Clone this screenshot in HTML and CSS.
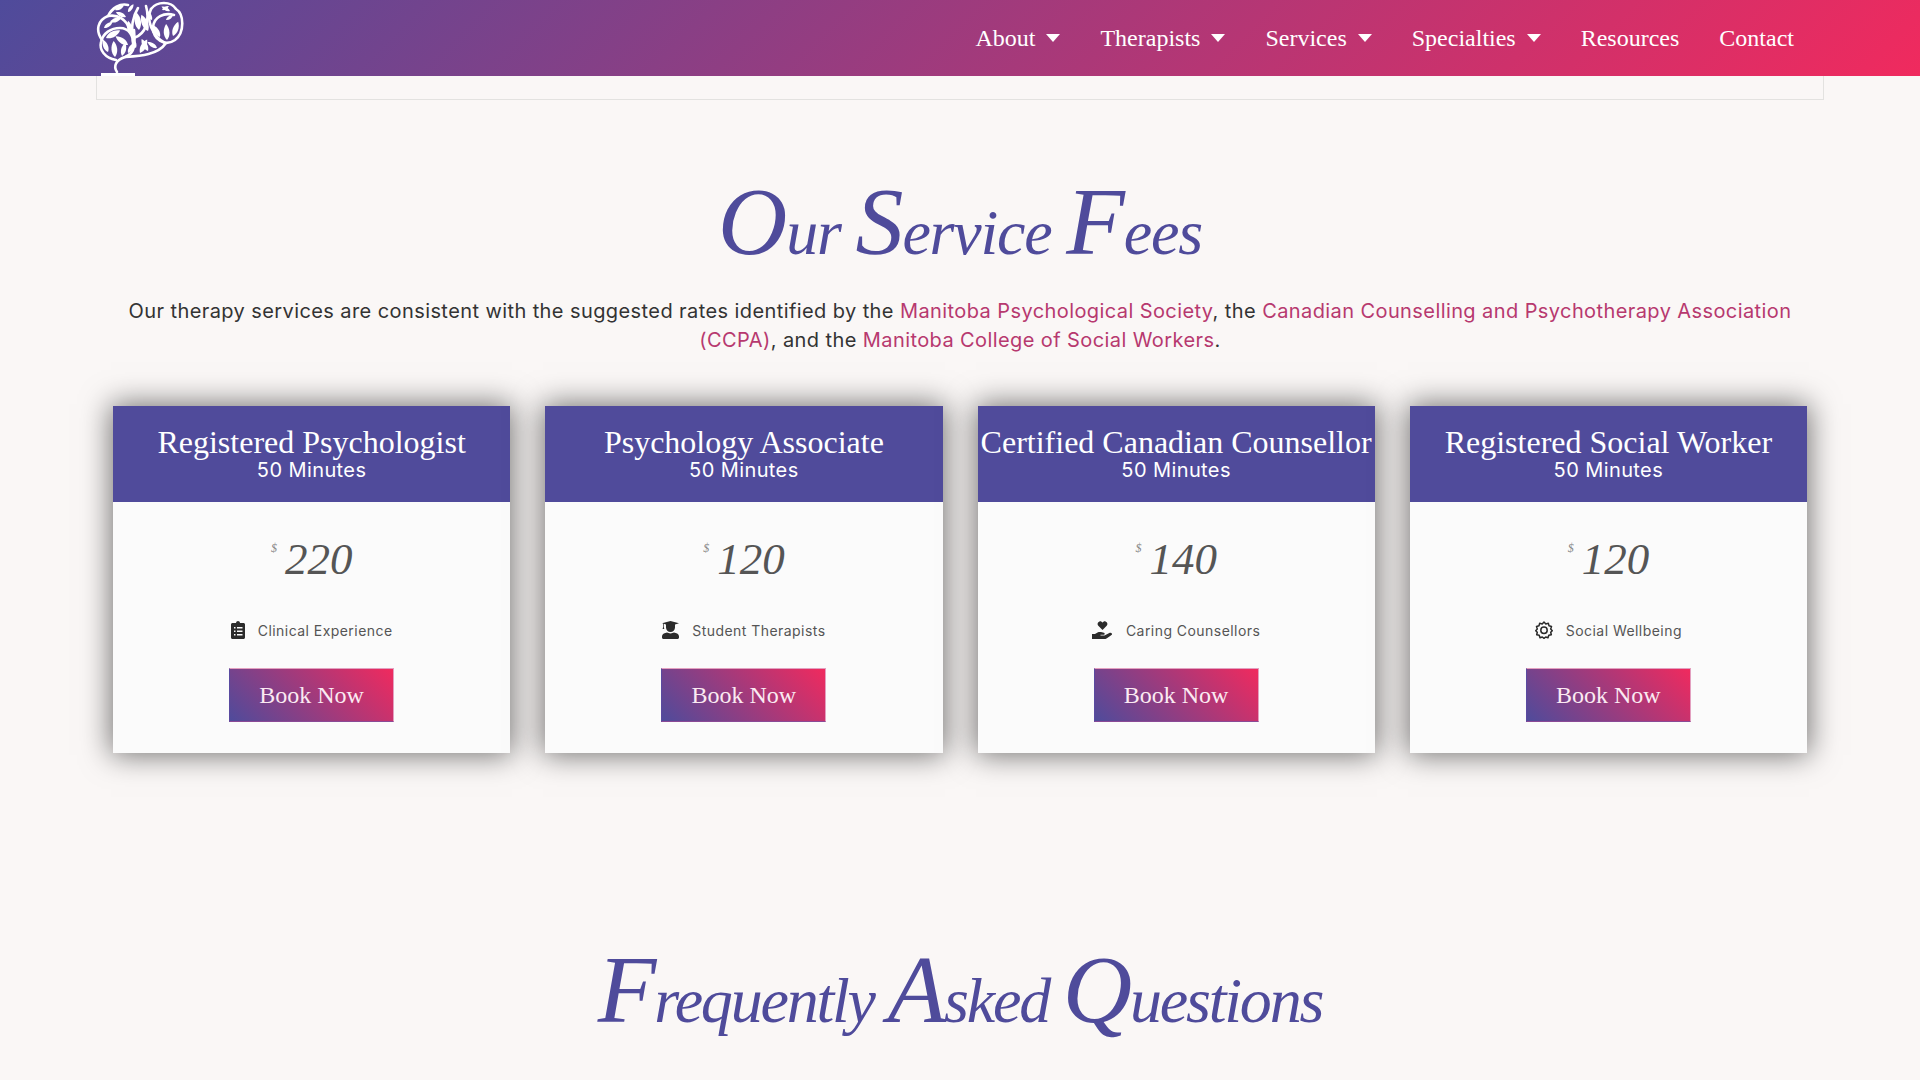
FILE: index.html
```html
<!DOCTYPE html>
<html lang="en">
<head>
    <meta charset="UTF-8">
    <title>Our Service Fees</title>
    <link rel="stylesheet" href="styles.css">
</head>
<body>
    <header class="site-header">
        <a class="logo" href="#" aria-label="Home">
            <svg width="88" height="76" viewBox="96 0 88 76">
                <defs>
                    <path id="leaf" d="M0 0C-3.800 -4 -3.800 -11 0 -16C3.800 -11 3.800 -4 0 0Z" fill="#fff"/>
                </defs>
                <g fill="none" stroke="#fff" stroke-width="2.600" stroke-linecap="round">
                    <path d="M117 72C113 66 116 60 125 57C136 53 135 42 134 30"/>
                    <path d="M125 57C140 56 158 55 166 43"/>
                    <path d="M134 40C130 28 133 16 138 8"/>
                    <path d="M134 38C146 34 150 20 146 6"/>
                    <path d="M116 60C105 58 99 50 101 42C103 33 111 28 120 28C129 28 134 36 133 45"/>
                    <path d="M102 40C95 30 98 20 108 16C112 8 120 3 128 5"/>
                    <path d="M108 16C118 14 127 20 129 29"/>
                    <path d="M151 9C157 1 171 1 176 9C184 14 185 32 175 40C165 47 153 40 153 27C154 17 164 12 174 15"/>
                    <path d="M151 9C146 20 152 36 165 43"/>
                </g>
                <use href="#leaf" transform="translate(115 57) rotate(-5)"/>
                <use href="#leaf" transform="translate(108 52) rotate(-22) scale(.85)"/>
                <use href="#leaf" transform="translate(122 56) rotate(14) scale(.85)"/>
                <use href="#leaf" transform="translate(128 45) rotate(-55) scale(.95)"/>
                <use href="#leaf" transform="translate(106 38) rotate(62) scale(1)"/>
                <use href="#leaf" transform="translate(104 28) rotate(55) scale(.65)"/>
                <use href="#leaf" transform="translate(110 22) rotate(70) scale(.75)"/>
                <use href="#leaf" transform="translate(126 17) rotate(-65) scale(.7)"/>
                <use href="#leaf" transform="translate(115 10) rotate(65) scale(.6)"/>
                <use href="#leaf" transform="translate(128 12) rotate(35) scale(.6)"/>
                <use href="#leaf" transform="translate(131 34) rotate(-12) scale(.85)"/>
                <use href="#leaf" transform="translate(139 30) rotate(-8) scale(1.100)"/>
                <use href="#leaf" transform="translate(128 53) rotate(30) scale(.7)"/>
                <use href="#leaf" transform="translate(140 53) rotate(28) scale(.95)"/>
                <use href="#leaf" transform="translate(148 51) rotate(-28) scale(.85)"/>
                <use href="#leaf" transform="translate(136 48) rotate(-22) scale(.7)"/>
                <use href="#leaf" transform="translate(157 48) rotate(-58) scale(.7)"/>
                <use href="#leaf" transform="translate(148 31) rotate(-22) scale(1.100)"/>
                <use href="#leaf" transform="translate(152 20) rotate(-30) scale(.7)"/>
                <use href="#leaf" transform="translate(167 40) rotate(-3) scale(1)"/>
                <use href="#leaf" transform="translate(160 37) rotate(-30) scale(.85)"/>
                <use href="#leaf" transform="translate(173 36) rotate(20) scale(.95)"/>
                <use href="#leaf" transform="translate(166 20) rotate(55) scale(.55)"/>
                <use href="#leaf" transform="translate(170 11) rotate(-62) scale(.6)"/>
                <use href="#leaf" transform="translate(162 10) rotate(60) scale(.5)"/>
                <rect x="101" y="73" width="34" height="3" fill="#fff"/>
            </svg>
        </a>
        <nav class="main-nav">
            <a href="#">About <span class="caret"></span></a>
            <a href="#">Therapists <span class="caret"></span></a>
            <a href="#">Services <span class="caret"></span></a>
            <a href="#">Specialties <span class="caret"></span></a>
            <a href="#">Resources</a>
            <a href="#">Contact</a>
        </nav>
    </header>

    <div class="top-box"></div>

    <section class="fees">
        <h2 class="script-title"><span class="cap">O</span>ur <span class="cap">S</span>ervice <span class="cap">F</span>ees</h2>
        <p class="intro">Our therapy services are consistent with the suggested rates identified by the <a href="#">Manitoba Psychological Society</a>, the <a href="#">Canadian Counselling and Psychotherapy Association</a><br><a href="#">(CCPA)</a>, and the <a href="#">Manitoba College of Social Workers</a>.</p>

        <div class="price-grid">
            <div class="price-card">
                <div class="price-head">
                    <h3>Registered Psychologist</h3>
                    <span>50 Minutes</span>
                </div>
                <div class="price-body">
                    <div class="price"><sup>$</sup>220</div>
                    <div class="feature">
                        <svg width="14" height="18" viewBox="0 0 14 18"><path fill="#2b2b2b" fill-rule="evenodd" d="M5 2C5 .8 6 0 7 0S9 .8 9 2H12.500C13.300 2 14 2.700 14 3.500V16.500C14 17.300 13.300 18 12.500 18H1.500C.7 18 0 17.300 0 16.500V3.500C0 2.700 .7 2 1.500 2ZM3 6V7.500H4.500V6ZM6 6V7.500H11.500V6ZM3 9.500V11H4.500V9.500ZM6 9.500V11H11.500V9.500ZM3 13V14.500H4.500V13ZM6 13V14.500H11.500V13Z"/></svg>
                        <span>Clinical Experience</span>
                    </div>
                    <a class="book-btn" href="#">Book Now</a>
                </div>
            </div>

            <div class="price-card">
                <div class="price-head">
                    <h3>Psychology Associate</h3>
                    <span>50 Minutes</span>
                </div>
                <div class="price-body">
                    <div class="price"><sup>$</sup>120</div>
                    <div class="feature">
                        <svg width="17" height="18" viewBox="0 0 17 18"><path fill="#2b2b2b" d="M8.500 0L17 2.300 13 3.400V6.500C13 9 11 11 8.500 11S4 9 4 6.500V3.400L1.800 2.800V6L2.300 8H.6L1.100 6V2.600L0 2.300ZM5 11.600C6 12.100 7 12.400 8.500 12.400S11 12.100 12 11.600L14.500 12.300C16 12.800 17 14 17 15.500V16.500C17 17.300 16.300 18 15.500 18H1.500C.7 18 0 17.300 0 16.500V15.500C0 14 1 12.800 2.500 12.300Z"/></svg>
                        <span>Student Therapists</span>
                    </div>
                    <a class="book-btn" href="#">Book Now</a>
                </div>
            </div>

            <div class="price-card">
                <div class="price-head">
                    <h3>Certified Canadian Counsellor</h3>
                    <span>50 Minutes</span>
                </div>
                <div class="price-body">
                    <div class="price"><sup>$</sup>140</div>
                    <div class="feature">
                        <svg width="21" height="18" viewBox="0 0 21 18"><path fill="#2b2b2b" d="M10.500 9L6.300 4.800C5 3.500 5.500 .8 7.500 .4C8.800 .1 9.800 .7 10.500 1.800C11.200 .7 12.200 .1 13.500 .4C15.500 .8 16 3.500 14.700 4.800ZM0 13H3L6 11.300C7 10.800 8 10.800 9 11L12 11.700C13 12 13 13.800 11.800 13.800H8.500V14.600H12.500L17.800 11.800C19.200 11.200 20.700 12.600 19.800 13.800C18.500 15 15 17.500 13.500 18H0Z"/></svg>
                        <span>Caring Counsellors</span>
                    </div>
                    <a class="book-btn" href="#">Book Now</a>
                </div>
            </div>

            <div class="price-card">
                <div class="price-head">
                    <h3>Registered Social Worker</h3>
                    <span>50 Minutes</span>
                </div>
                <div class="price-body">
                    <div class="price"><sup>$</sup>120</div>
                    <div class="feature">
                        <svg width="18" height="18" viewBox="0 0 18 18"><g fill="none" stroke="#2b2b2b" stroke-width="1.500" stroke-linejoin="round"><path d="M9 1L10.800 2.900 13.300 2.300 14 4.800 16.500 5.500 15.700 8 17.300 9.700 15.700 11.200 16.300 13.700 13.800 14.300 13 16.800 10.700 16 9 17.300 7.300 16 5 16.800 4.200 14.300 1.700 13.700 2.300 11.200 .7 9.700 2.300 8 1.500 5.500 4 4.800 4.700 2.300 7.200 2.900Z"/><circle cx="9" cy="9.300" r="3.200"/></g></svg>
                        <span>Social Wellbeing</span>
                    </div>
                    <a class="book-btn" href="#">Book Now</a>
                </div>
            </div>
        </div>
    </section>

    <section class="faq">
        <h2 class="script-title"><span class="cap">F</span>requently <span class="cap">A</span>sked <span class="cap">Q</span>uestions</h2>
    </section>
</body>
</html>
```

FILE: styles.css
```css
html, body {
    height: 1080px;
    overflow: hidden;
}
body {
    margin: 0;
    background-color: #faf7f6;
    font-family: "Inter", sans-serif;
    color: #333;
}
a {
    text-decoration: none;
}
.site-header {
    position: relative;
    z-index: 2;
    height: 76px;
    padding: 0 126px 0 96px;
    display: flex;
    justify-content: space-between;
    align-items: center;
    background: linear-gradient(135deg, #4f4b9b, #f02a5e);
}
.logo {
    display: flex;
    height: 76px;
}
.main-nav {
    display: flex;
    gap: 40px;
}
.main-nav a {
    display: flex;
    align-items: center;
    font-family: "Liberation Serif", serif;
    font-size: 24px;
    color: #fff;
    white-space: pre;
}
.caret {
    width: 0;
    height: 0;
    margin-left: 5px;
    border-left: 7px solid transparent;
    border-right: 7px solid transparent;
    border-top: 8px solid #fff;
}
.top-box {
    height: 23px;
    margin: 0 96px;
    border: 1px solid #e3e2e0;
    border-top: none;
}
.fees {
    margin: 0 96px;
    padding: 0 17px;
}
.script-title {
    margin: 0;
    font-family: "Liberation Serif", serif;
    font-style: italic;
    font-weight: normal;
    font-size: 64px;
    line-height: 100px;
    letter-spacing: -1.200px;
    text-align: center;
    color: #4f4b9b;
    white-space: nowrap;
}
.fees .script-title {
    margin-top: 83px;
}
.faq .script-title {
    letter-spacing: -2.200px;
}
.script-title .cap {
    font-size: 96px;
    line-height: 0;
}
.intro {
    margin: 14px 0 0;
    font-size: 20px;
    letter-spacing: 0.410px;
    line-height: 29px;
    text-align: center;
}
.intro a {
    color: #b7396f;
}
.price-grid {
    margin-top: 51px;
    display: grid;
    grid-template-columns: repeat(4, 1fr);
    gap: 35px;
}
.price-card {
    background-color: #fbfbfb;
    box-shadow: 0 0 28px 2px rgba(0, 0, 0, 0.55);
}
.price-head {
    height: 96px;
    padding-top: 18px;
    box-sizing: border-box;
    background-color: #504b9b;
    color: #fff;
    text-align: center;
    font-size: 20px;
    letter-spacing: 0.400px;
    line-height: 20px;
}
.price-head h3 {
    margin: 0;
    font-family: "Liberation Serif", serif;
    font-weight: normal;
    font-size: 32px;
    letter-spacing: 0;
    line-height: 36px;
    white-space: nowrap;
}
.price-body {
    padding: 31px 0 31px;
    display: flex;
    flex-direction: column;
    align-items: center;
}
.price {
    font-family: "Liberation Serif", serif;
    font-style: italic;
    font-size: 45px;
    line-height: 52px;
    color: #555;
}
.price sup {
    margin-right: 8px;
    font-size: 12px;
    line-height: 0;
    vertical-align: 22px;
    color: #888;
}
.feature {
    margin-top: 33px;
    display: flex;
    align-items: center;
    gap: 13px;
    height: 24px;
    font-size: 14px;
    letter-spacing: 0.450px;
    color: #555;
}
.book-btn {
    margin-top: 26px;
    width: 165px;
    height: 54px;
    box-sizing: border-box;
    display: flex;
    justify-content: center;
    align-items: center;
    border: 1px solid #e3a0c0;
    border-bottom-color: #8a4a96;
    border-left-color: #5a4aa0;
    background: linear-gradient(45deg, #4f4b9b, #f02a5e);
    font-family: "Liberation Serif", serif;
    font-size: 24px;
    color: #fbeaf2;
}
.faq {
    margin-top: 198px;
}
```
